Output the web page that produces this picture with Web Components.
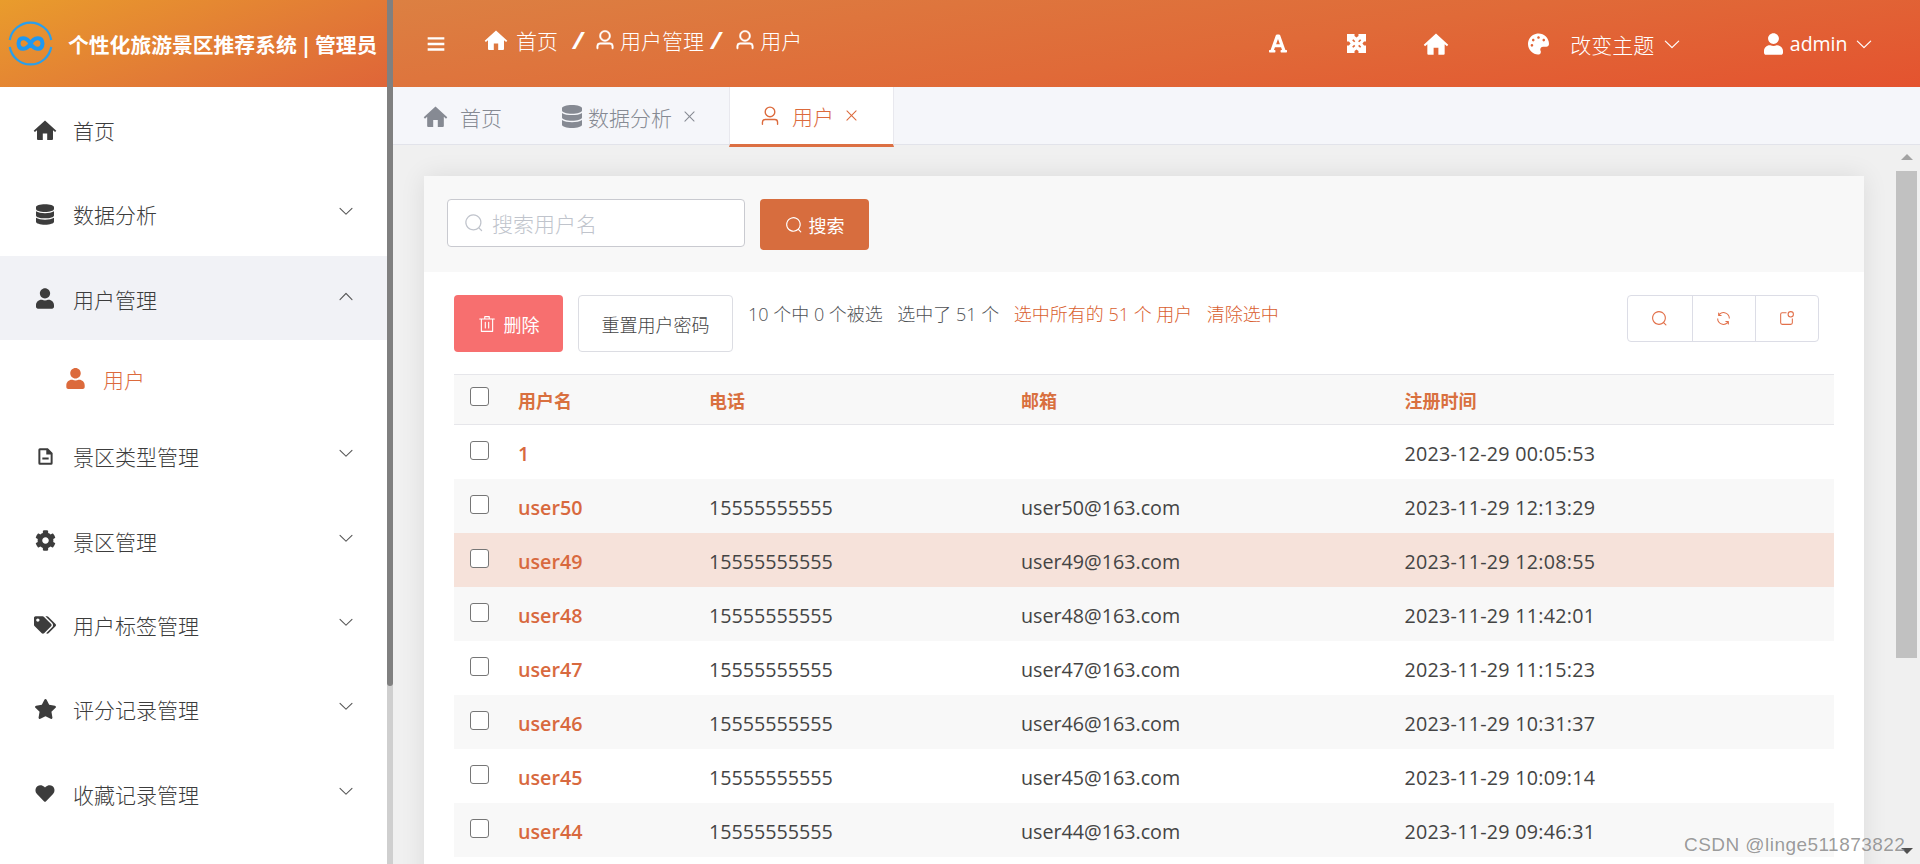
<!DOCTYPE html>
<html lang="zh-CN">
<head>
<meta charset="utf-8">
<title>用户</title>
<style>
    html, body { margin: 0; height: 100%; overflow: hidden; }
    body { font-family: "Open Sans", "Noto Sans CJK SC", sans-serif; color: #444; background: #f0f0f0; }
    .watermark {
        position: absolute; left: 1684px; top: 834px;
        font: 19px "Liberation Sans", sans-serif; letter-spacing: 0.45px;
        color: rgba(90, 90, 90, 0.62); text-shadow: 0 0 1px rgba(255,255,255,.8);
    }
</style>
</head>
<body>
<app-shell></app-shell>
<div class="watermark">CSDN @linge511873822</div>

<script>
const ICONS = {
    home: ["0 0 24 24", "M12 2.400.7 12.700l1.200 1.400L4 12.300V21a1 1 0 0 0 1 1h4.800v-6.600h4.400V22H19a1 1 0 0 0 1-1v-8.700l2.100 1.800 1.200-1.400z"],
    database: ["0 0 448 512", "M448 73.143v45.714C448 159.143 347.667 192 224 192S0 159.143 0 118.857V73.143C0 32.857 100.333 0 224 0s224 32.857 224 73.143zM448 176v102.857C448 319.143 347.667 352 224 352S0 319.143 0 278.857V176c48.125 33.143 136.208 48.572 224 48.572S399.874 209.143 448 176zm0 160v102.857C448 479.143 347.667 512 224 512S0 479.143 0 438.857V336c48.125 33.143 136.208 48.572 224 48.572S399.874 369.143 448 336z"],
    user: ["0 0 448 512", "M224 256c70.7 0 128-57.3 128-128S294.7 0 224 0 96 57.3 96 128s57.3 128 128 128zm89.6 32h-16.7c-22.2 10.2-46.9 16-72.9 16s-50.6-5.8-72.9-16h-16.7C60.2 288 0 348.2 0 422.4V464c0 26.5 21.5 48 48 48h352c26.5 0 48-21.5 48-48v-41.6c0-74.2-60.2-134.4-134.4-134.4z"],
    doc: ["0 0 24 24", "M5 1.500h10l6 6v13a2 2 0 0 1-2 2H5a2 2 0 0 1-2-2v-17a2 2 0 0 1 2-2zm.500 2.600v15.800h13V9.500h-5.500V4.100zM8 13.200h8v2.500H8z"],
    cog: ["0 0 512 512", "M487.4 315.7l-42.6-24.6c4.3-23.2 4.3-47 0-70.2l42.6-24.6c4.9-2.8 7.1-8.6 5.5-14-11.1-35.6-30-67.8-54.7-94.6-3.8-4.1-10-5.1-14.8-2.3L380.8 110c-17.9-15.4-38.5-27.3-60.8-35.1V25.800c0-5.6-3.9-10.5-9.4-11.7-36.7-8.2-74.3-7.8-109.2 0-5.5 1.2-9.4 6.1-9.4 11.7V75c-22.2 7.9-42.8 19.8-60.8 35.1L88.7 85.500c-4.9-2.8-11-1.9-14.8 2.3-24.7 26.7-43.6 58.9-54.7 94.6-1.7 5.4.6 11.2 5.5 14L67.3 221c-4.3 23.2-4.3 47 0 70.2l-42.6 24.6c-4.9 2.8-7.1 8.6-5.5 14 11.1 35.6 30 67.8 54.7 94.6 3.8 4.1 10 5.1 14.8 2.3l42.6-24.6c17.9 15.4 38.5 27.3 60.8 35.1v49.2c0 5.6 3.9 10.5 9.4 11.7 36.7 8.2 74.3 7.8 109.2 0 5.5-1.2 9.4-6.1 9.4-11.7v-49.2c22.2-7.9 42.8-19.8 60.8-35.1l42.6 24.6c4.9 2.8 11 1.9 14.8-2.3 24.7-26.7 43.6-58.9 54.7-94.6 1.5-5.5-.7-11.3-5.6-14.1zM256 336c-44.1 0-80-35.9-80-80s35.9-80 80-80 80 35.9 80 80-35.9 80-80 80z"],
    tags: ["0 0 640 512", "M497.941 225.941L286.059 14.059A48 48 0 0 0 252.118 0H48C21.49 0 0 21.49 0 48v204.118a48 48 0 0 0 14.059 33.941l211.882 211.882c18.744 18.745 49.136 18.746 67.882 0l204.118-204.118c18.745-18.745 18.745-49.137 0-67.882zM112 160c-26.51 0-48-21.49-48-48s21.49-48 48-48 48 21.49 48 48-21.49 48-48 48zm513.941 133.823L421.823 497.941c-18.745 18.745-49.137 18.745-67.882 0l-.36-.36L527.64 323.522c16.999-16.999 26.36-39.6 26.36-63.64s-9.362-46.641-26.36-63.64L331.397 0h48.721a48 48 0 0 1 33.941 14.059l211.882 211.882c18.745 18.745 18.745 49.137 0 67.882z"],
    star: ["0 0 576 512", "M259.3 17.8L194 150.2 47.9 171.5c-26.2 3.8-36.7 36.1-17.7 54.6l105.7 103-25 145.5c-4.5 26.3 23.2 46 46.4 33.7L288 439.6l130.7 68.7c23.2 12.2 50.9-7.4 46.4-33.7l-25-145.5 105.7-103c19-18.5 8.5-50.8-17.7-54.6L382 150.2 316.7 17.8c-11.7-23.6-45.6-23.9-57.4 0z"],
    heart: ["0 0 512 512", "M462.3 62.6C407.5 15.9 326 24.3 275.7 76.2L256 96.5l-19.7-20.3C186.1 24.3 104.5 15.9 49.7 62.6c-62.8 53.6-66.1 149.8-9.9 207.9l193.5 199.8c12.5 12.9 32.8 12.9 45.3 0l193.5-199.8c56.3-58.1 53-154.3-9.8-207.9z"],
    palette: ["0 0 512 512", "M204.3 5C104.9 24.4 24.8 104.3 5.2 203.4c-37 187 131.7 326.4 258.8 306.7 41.2-6.4 61.4-54.6 42.5-91.7-23.1-45.4 9.9-98.4 60.9-98.4h79.7c35.8 0 64.8-29.6 64.9-65.3C511.5 97.1 368.1-26.9 204.3 5zM96 320c-17.7 0-32-14.3-32-32s14.3-32 32-32 32 14.3 32 32-14.3 32-32 32zm32-128c-17.7 0-32-14.3-32-32s14.3-32 32-32 32 14.3 32 32-14.3 32-32 32zm128-64c-17.7 0-32-14.3-32-32s14.3-32 32-32 32 14.3 32 32-14.3 32-32 32zm128 64c-17.7 0-32-14.3-32-32s14.3-32 32-32 32 14.3 32 32-14.3 32-32 32z"],
    font: ["0 0 448 512", "M432 416h-23.41L277.88 53.69A32 32 0 0 0 247.58 32h-47.16a32 32 0 0 0-30.3 21.69L39.41 416H16a16 16 0 0 0-16 16v32a16 16 0 0 0 16 16h128a16 16 0 0 0 16-16v-32a16 16 0 0 0-16-16h-19.6l23.3-64h152.6l23.3 64H304a16 16 0 0 0-16 16v32a16 16 0 0 0 16 16h128a16 16 0 0 0 16-16v-32a16 16 0 0 0-16-16zM176.85 272L224 142.51 271.15 272z"],
    // square with cut-outs, the way the fullscreen icon renders at this size
    expand: ["0 0 24 24", "M0 0H9.500V2.500L12 4.500 14.500 2.500V0H24V9.500H21.500L19.500 12 21.500 14.500H24V24H14.500V21.500L12 19.500 9.500 21.500V24H0V14.500H2.500L4.500 12 2.500 9.500H0zM6.500 8 8 6.500 10.500 9 9 10.500zM18 8 16.500 6.500 14 9 15.500 10.500zM6.500 16 8 17.500 10.500 15 9 13.500zM18 16 16.500 17.500 14 15 15.500 13.500z"],
    bars: ["0 0 24 24", "M2 3.800h20v2.900H2zM2 10.500h20v2.900H2zM2 17.200h20v2.900H2z"],
    search: ["0 0 1024 1024", "m795.904 750.72 124.992 124.928a32 32 0 0 1-45.248 45.248L750.656 795.904a416 416 0 1 1 45.248-45.248zM480 832a352 352 0 1 0 0-704 352 352 0 0 0 0 704z"],
    userline: ["0 0 1024 1024", "M512 512a192 192 0 1 0 0-384 192 192 0 0 0 0 384zm0 64a256 256 0 1 1 0-512 256 256 0 0 1 0 512zm320 320v-96a96 96 0 0 0-96-96H288a96 96 0 0 0-96 96v96a32 32 0 1 1-64 0v-96a160 160 0 0 1 160-160h448a160 160 0 0 1 160 160v96a32 32 0 1 1-64 0z"],
    down: ["0 0 1024 1024", "M831.872 340.864 512 652.672 192.128 340.864a30.592 30.592 0 0 0-42.752 0 29.12 29.12 0 0 0 0 41.6L489.664 714.24a32 32 0 0 0 44.672 0l340.288-331.712a29.12 29.12 0 0 0 0-41.728 30.592 30.592 0 0 0-42.752 0z"],
    up: ["0 0 1024 1024", "M488.832 344.32l-339.84 356.672a32 32 0 0 0 0 44.16l.384.384a29.44 29.44 0 0 0 42.688 0l320-335.872 319.872 335.872a29.44 29.44 0 0 0 42.688 0l.384-.384a32 32 0 0 0 0-44.16L535.168 344.32a32 32 0 0 0-46.336 0z"],
    trash: ["0 0 1024 1024", "M160 256H96a32 32 0 0 1 0-64h256V95.936a32 32 0 0 1 32-32h256a32 32 0 0 1 32 32V192h256a32 32 0 1 1 0 64h-64v672a32 32 0 0 1-32 32H192a32 32 0 0 1-32-32V256zm448-64v-64H416v64h192zM224 896h576V256H224v640zm192-128a32 32 0 0 1-32-32V416a32 32 0 0 1 64 0v320a32 32 0 0 1-32 32zm192 0a32 32 0 0 1-32-32V416a32 32 0 0 1 64 0v320a32 32 0 0 1-32 32z"],
    refresh: ["0 0 1024 1024", "M771.776 794.88A384 384 0 0 1 128 512h64a320 320 0 0 0 555.712 216.448H654.72a32 32 0 1 1 0-64h149.056a32 32 0 0 1 32 32v148.928a32 32 0 1 1-64 0v-50.56zM276.288 295.616h92.992a32 32 0 0 1 0 64H220.16a32 32 0 0 1-32-32V178.56a32 32 0 0 1 64 0v50.56A384 384 0 0 1 896.128 512h-64a320 320 0 0 0-555.776-216.384z"],
    notify: ["0 0 1024 1024", "M512 128v64H256a64 64 0 0 0-64 64v512a64 64 0 0 0 64 64h512a64 64 0 0 0 64-64V512h64v256a128 128 0 0 1-128 128H256a128 128 0 0 1-128-128V256a128 128 0 0 1 128-128h256zM768 384a128 128 0 1 0 0-256 128 128 0 0 0 0 256zm0 64a192 192 0 1 1 0-384 192 192 0 0 1 0 384z"],
    close: ["0 0 1024 1024", "M764.288 214.592 512 466.880 259.712 214.592a31.936 31.936 0 0 0-45.12 45.12L466.752 512 214.528 764.224a31.936 31.936 0 1 0 45.12 45.184L512 557.184l252.288 252.288a31.936 31.936 0 0 0 45.12-45.12L557.120 512.064l252.288-252.352a31.936 31.936 0 1 0-45.12-45.184z"],
};

const CJK = `"Open Sans", "Noto Sans CJK SC", sans-serif`;

class XIcon extends HTMLElement {
    connectedCallback() {
        const [box, d] = ICONS[this.getAttribute("name")];
        const w = this.getAttribute("w") || 20;
        const h = this.getAttribute("h") || w;
        const sw = this.getAttribute("sw");
        const stroke = sw ? `stroke="currentColor" stroke-width="${sw}"` : "";
        this.attachShadow({ mode: "open" });
        this.shadowRoot.innerHTML = `
            <style>
            :host { display: inline-flex; flex: none; color: inherit; }
            svg { display: block; }
            </style>
            <svg width="${w}" height="${h}" viewBox="${box}" fill="currentColor" fill-rule="evenodd" ${stroke}><path d="${d}"/></svg>
        `;
    }
}
customElements.define("x-icon", XIcon);

class AppShell extends HTMLElement {
    constructor() {
        super();
        this.attachShadow({ mode: "open" });
        this.shadowRoot.innerHTML = `
            <style>
            :host { display: grid; grid-template-columns: 387px 6px 1fr; height: 864px; overflow: hidden; }
            .bar { background: #cfcfcf; }
            .bar div { height: 686px; background: #808080; border-radius: 0 0 3px 3px; }
            .main { display: flex; flex-direction: column; min-width: 0; height: 864px; }
            </style>
            <side-menu></side-menu>
            <div class="bar"><div></div></div>
            <div class="main">
                <top-bar></top-bar>
                <tab-bar></tab-bar>
                <user-page></user-page>
            </div>
        `;
    }
}

class SideMenu extends HTMLElement {
    constructor() {
        super();
        const items = [
            ["home", "首页", 0, 24, 24],
            ["database", "数据分析", 1, 18, 21],
            ["user", "用户管理", 2, 18, 21],
            ["sub"],
            ["doc", "景区类型管理", 1, 19, 21],
            ["cog", "景区管理", 1, 21, 21],
            ["tags", "用户标签管理", 1, 22, 18],
            ["star", "评分记录管理", 1, 23, 20],
            ["heart", "收藏记录管理", 1, 22, 19],
        ];
        const rows = items.map(([icon, text, arrow, w, h]) => {
            if (icon === "sub") {
                return `<div class="row sub"><span class="ico"><x-icon name="user" w="19" h="21"></x-icon></span><span class="tx">用户</span></div>`;
            }
            const caret = arrow ? `<x-icon class="arrow" name="${arrow === 2 ? "up" : "down"}" w="18"></x-icon>` : "";
            return `<div class="row ${arrow === 2 ? "open" : ""}"><span class="ico"><x-icon name="${icon}" w="${w}" h="${h}"></x-icon></span><span class="tx">${text}</span>${caret}</div>`;
        }).join("");
        this.attachShadow({ mode: "open" });
        this.shadowRoot.innerHTML = `
            <style>
            :host { display: block; background: #fff; height: 864px; overflow: hidden; font-family: ${CJK}; }
            .logo {
                height: 87px; display: flex; align-items: center; padding-left: 8px; gap: 15px;
                background: linear-gradient(160deg, #e99c2c 0%, #e27a36 60%, #df6538 100%);
                color: #fff; font-size: 20.800px; font-weight: 700; white-space: nowrap; word-spacing: -2px;
            }
            .row {
                height: 84.300px; box-sizing: border-box; padding: 2px 34px 0; display: flex; align-items: center;
                color: #3c3c3c; font-size: 21px; font-weight: 300;
            }
            .row .ico { width: 40px; display: flex; justify-content: center; margin-left: -9px; margin-right: 8px; }
            .row .tx { flex: 1; }
            .row .arrow { color: #555; position: relative; top: -3px; margin-right: -2px; }
            .open { background: #f1f2f6; }
            .row.sub { color: #dc6a3c; height: 73.300px; padding-top: 4.700px; padding-left: 64px; }
            .row.sub .ico { margin-right: 8px; }
            </style>
            <div class="logo">
                <svg width="45" height="45" viewBox="0 0 45 45" fill="none">
                    <path d="M1.800 19 A21 21 0 0 1 43.200 19 M43.200 26 A21 21 0 0 1 1.800 26" stroke="#2a9fec" stroke-width="2.200"/>
                    <path d="M22.500 22.500 C19 16 11 15 10.500 22.500 C11 30 19 29 22.500 22.500 C26 16 34 15 34.500 22.500 C34 30 26 29 22.500 22.500 Z" stroke="#2098f0" stroke-width="4"/>
                </svg>
                <span>个性化旅游景区推荐系统 | 管理员</span>
            </div>
            ${rows}
        `;
    }
}

class TopBar extends HTMLElement {
    constructor() {
        super();
        this.attachShadow({ mode: "open" });
        this.shadowRoot.innerHTML = `
            <style>
            :host {
                display: flex; flex: none; height: 87px; align-items: center; color: #fff;
                background: linear-gradient(172deg, #dc8042 0%, #e06a38 55%, #e4532f 100%);
                font-family: ${CJK}; font-size: 21px; font-weight: 300;
                padding-left: 33px; box-sizing: border-box;
            }
            .crumbs { display: flex; align-items: center; position: relative; top: -4px; margin-left: 38px; }
            .crumbs .sep { font-weight: 700; font-style: italic; font-size: 24px; line-height: 1; }
            .crumbs .tx { margin-left: 4px; }
            .crumbs .tx1 { margin-left: 8px; }
            .right { margin-left: auto; display: flex; align-items: center; }
            .dd { display: flex; align-items: center; }
            .admin { font-size: 19.500px; font-weight: 400; }
            </style>
            <x-icon name="bars" w="20"></x-icon>
            <div class="crumbs">
                <x-icon name="home" w="24" h="24"></x-icon><span class="tx tx1">首页</span>
                <span class="sep" style="margin:0 11px 0 15px">/</span>
                <x-icon name="userline" w="22" sw="26"></x-icon><span class="tx">用户管理</span>
                <span class="sep" style="margin:0 13px 0 7px">/</span>
                <x-icon name="userline" w="22" sw="26"></x-icon><span class="tx">用户</span>
            </div>
            <div class="right">
                <x-icon name="font" w="18" h="21" style="margin-right:60.500px"></x-icon>
                <x-icon name="expand" w="19" h="19" style="margin-right:57px"></x-icon>
                <x-icon name="home" w="26" h="26" style="margin-right:79px"></x-icon>
                <div class="dd">
                    <x-icon name="palette" w="21" h="22" style="margin-right:21px"></x-icon>
                    <span>改变主题</span>
                    <x-icon name="down" w="20" style="margin-left:8px;margin-right:81.500px"></x-icon>
                </div>
                <div class="dd admin">
                    <x-icon name="user" w="19" h="22" style="margin-right:7px"></x-icon>
                    <span>admin</span>
                    <x-icon name="down" w="20" style="margin-left:6.500px;margin-right:46px"></x-icon>
                </div>
            </div>
        `;
    }
}

class TabBar extends HTMLElement {
    constructor() {
        super();
        this.attachShadow({ mode: "open" });
        this.shadowRoot.innerHTML = `
            <style>
            :host {
                display: flex; flex: none; height: 58px; box-sizing: border-box; background: #f5f6fa;
                border-bottom: 1px solid #e2e3ea; color: #868a93;
                font-family: ${CJK}; font-size: 21px; font-weight: 300;
            }
            .tab { display: flex; align-items: center; height: 59px; box-sizing: border-box; flex: none; }
            .active {
                background: #fff; color: #dc6a3c; border-bottom: 3px solid #dc6f42; width: 165px; height: 60px;
                border-left: 1px solid #e8e8ee; border-right: 1px solid #e8e8ee; padding: 0 0 0 29px; position: relative; z-index: 1;
            }
            </style>
            <div class="tab" style="padding-left:30px;width:169px">
                <x-icon name="home" w="25" h="25"></x-icon><span style="margin-left:12px">首页</span>
            </div>
            <div class="tab" style="width:167px">
                <x-icon name="database" w="20" h="23"></x-icon><span style="margin-left:6px">数据分析</span>
                <x-icon name="close" w="17" style="margin-left:9px"></x-icon>
            </div>
            <div class="tab active">
                <x-icon name="userline" w="22"></x-icon><span style="margin-left:11px">用户</span>
                <x-icon name="close" w="17" style="margin-left:9px"></x-icon>
            </div>
        `;
    }
}

class UserTable extends HTMLElement {
    constructor() {
        super();
        const rows = [
            ["1", "", "", "2023-12-29 00:05:53"],
            ["user50", "15555555555", "user50@163.com", "2023-11-29 12:13:29"],
            ["user49", "15555555555", "user49@163.com", "2023-11-29 12:08:55"],
            ["user48", "15555555555", "user48@163.com", "2023-11-29 11:42:01"],
            ["user47", "15555555555", "user47@163.com", "2023-11-29 11:15:23"],
            ["user46", "15555555555", "user46@163.com", "2023-11-29 10:31:37"],
            ["user45", "15555555555", "user45@163.com", "2023-11-29 10:09:14"],
            ["user44", "15555555555", "user44@163.com", "2023-11-29 09:46:31"],
        ];
        const body = rows.map((r, i) => `
            <div class="row ${i % 2 ? "even" : ""} ${r[0] === "user49" ? "hover" : ""}">
                <span class="ck"></span>
                <a>${r[0]}</a><span>${r[1]}</span><span>${r[2]}</span><span class="date">${r[3]}</span>
            </div>`).join("");
        this.attachShadow({ mode: "open" });
        this.shadowRoot.innerHTML = `
            <style>
            :host { display: block; font-size: 19.700px; color: #444; }
            .row { display: grid; grid-template-columns: 64px 191px 312px 383.500px 1fr; align-items: center; height: 54px; }
            .row > :not(.ck) { position: relative; top: 1px; }
            .head { height: 51px; box-sizing: border-box; background: #f8f8f8; border-top: 1px solid #e6e6ea; border-bottom: 1px solid #e6e6ea; color: #d9703f; font-size: 18px; font-weight: 700; }
            .head > :not(.ck) { top: 0; }
            .even { background: #f8f8f8; }
            .row.hover { background: #f6e2da; }
            a { color: #d8693e; font-weight: 600; }
            .date { letter-spacing: 0.260px; }
            .ck {
                width: 19px; height: 19px; box-sizing: border-box; border: 1.500px solid #767676; border-radius: 3px;
                background: #fff; margin-left: 16px; position: relative; top: -2px;
            }
            .head .ck { top: -3px; }
            </style>
            <div class="row head"><span class="ck"></span><span>用户名</span><span>电话</span><span>邮箱</span><span>注册时间</span></div>
            ${body}
        `;
    }
}

class UserPage extends HTMLElement {
    constructor() {
        super();
        this.attachShadow({ mode: "open" });
        this.shadowRoot.innerHTML = `
            <style>
            :host {
                display: flex; flex: 1; min-height: 0; overflow: hidden; background: #f0f0f0;
                font-family: ${CJK};
            }
            .pad { flex: 1; min-width: 0; padding: 31px 32px 0 31px; }
            .card { background: #fff; height: 800px; box-shadow: 0 0 24px rgba(0,0,0,.09); }
            .search { height: 96px; box-sizing: border-box; background: #f8f8f8; padding: 23px 23px; display: flex; gap: 15px; align-items: flex-start; }
            .input {
                width: 298px; height: 48px; box-sizing: border-box; background: #fff; border: 1px solid #c9cad0; border-radius: 4px;
                display: flex; align-items: center; padding-left: 16px; gap: 8px; color: #c0c4cc; font-size: 21px; font-weight: 300;
            }
            .go {
                width: 109px; height: 51px; background: #d76d3e; border-radius: 4px; color: #fff;
                display: flex; align-items: center; justify-content: center; gap: 6px; font-size: 18px; font-weight: 400;
            }
            .body { padding: 23px 30px 0; }
            .tools { display: flex; align-items: flex-start; height: 79px; }
            .del {
                width: 109px; height: 57px; background: #f76f6f; border-radius: 4px; color: #fff; margin-right: 15px;
                display: flex; align-items: center; justify-content: center; gap: 8px; font-size: 18px; font-weight: 400;
            }
            .reset {
                width: 155px; height: 57px; box-sizing: border-box; background: #fff; border: 1px solid #dcdde3; border-radius: 4px; margin-right: 15px;
                display: flex; align-items: center; justify-content: center; color: #444; font-size: 18px; font-weight: 300;
            }
            .sel { display: flex; gap: 14.500px; font-size: 18px; font-weight: 300; color: #505256; padding-top: 5px; white-space: nowrap; }
            .sel b { font-weight: inherit; color: #d9602f; }
            .btns {
                margin-left: auto; margin-right: 15px; width: 192px; height: 47px; box-sizing: border-box; border: 1px solid #dcdde6; border-radius: 4px;
                display: grid; grid-template-columns: 64px 63px 1fr; color: #e2704a;
            }
            .btns span { display: flex; align-items: center; justify-content: center; padding-right: 2px; }
            .btns span + span { border-left: 1px solid #dcdde6; }
            .sb { width: 24px; flex: none; background: #f0f0f0; position: relative; }
            .sb .thumb { margin-top: 26px; width: 21px; height: 487px; background: #c1c1c1; }
            .tri { position: absolute; left: 5px; width: 0; height: 0; border-left: 6px solid transparent; border-right: 6px solid transparent; }
            .tri.up { top: 9px; border-bottom: 6px solid #a3a3a3; }
            .tri.dn { top: 703px; border-top: 6px solid #505050; }
            </style>
            <div class="pad">
                <div class="card">
                    <div class="search">
                        <div class="input"><x-icon name="search" w="20"></x-icon><span>搜索用户名</span></div>
                        <div class="go"><x-icon name="search" w="18"></x-icon><span>搜索</span></div>
                    </div>
                    <div class="body">
                        <div class="tools">
                            <div class="del"><x-icon name="trash" w="18"></x-icon><span>删除</span></div>
                            <div class="reset">重置用户密码</div>
                            <div class="sel">
                                <span>10 个中 0 个被选</span><span>选中了 51 个</span>
                                <b>选中所有的 51 个 用户</b><b>清除选中</b>
                            </div>
                            <div class="btns">
                                <span><x-icon name="search" w="17"></x-icon></span>
                                <span><x-icon name="refresh" w="17"></x-icon></span>
                                <span><x-icon name="notify" w="17"></x-icon></span>
                            </div>
                        </div>
                        <user-table></user-table>
                    </div>
                </div>
            </div>
            <div class="sb"><div class="thumb"></div><i class="tri up"></i><i class="tri dn"></i></div>
        `;
    }
}

customElements.define("side-menu", SideMenu);
customElements.define("top-bar", TopBar);
customElements.define("tab-bar", TabBar);
customElements.define("user-table", UserTable);
customElements.define("user-page", UserPage);
customElements.define("app-shell", AppShell);
</script>
</body>
</html>
